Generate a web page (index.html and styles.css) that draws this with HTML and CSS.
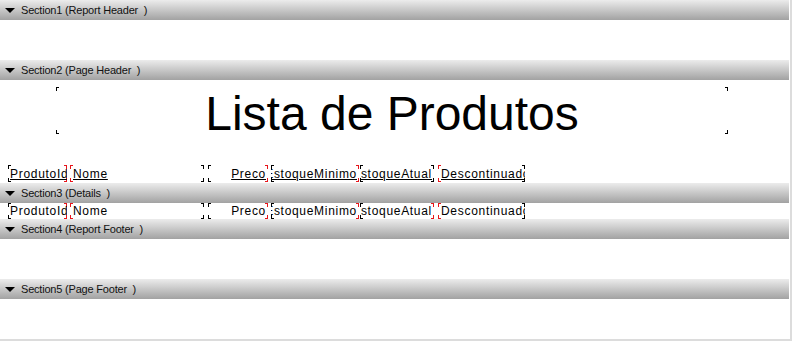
FILE: index.html
```html
<!DOCTYPE html>
<html lang="pt">
<head>
  <meta charset="UTF-8" />
  <title>Lista de Produtos - Designer</title>
  <link rel="stylesheet" href="styles.css">
</head>
<body>

<div class="report">
  <div class="band"><span class="arrow"></span>Section1 (Report Header&nbsp; )</div>
  <div class="area report-header"></div>

  <div class="band"><span class="arrow"></span>Section2 (Page Header&nbsp; )</div>
  <div class="area page-header">
    <div class="title">Lista de Produtos</div>
    <div class="fields heading">
      <div class="field f-id rr"><span>ProdutoId</span></div>
      <div class="field f-nome lr"><span>Nome</span></div>
      <div class="field f-preco rr right"><span>Preco</span></div>
      <div class="field f-min rr right"><span>EstoqueMinimo</span></div>
      <div class="field f-atual right"><span>EstoqueAtual</span></div>
      <div class="field f-desc lr"><span>Descontinuado</span></div>
    </div>
  </div>

  <div class="band"><span class="arrow"></span>Section3 (Details&nbsp; )</div>
  <div class="area details">
    <div class="fields">
      <div class="field f-id rr"><span>ProdutoId</span></div>
      <div class="field f-nome lr"><span>Nome</span></div>
      <div class="field f-preco rr right"><span>Preco</span></div>
      <div class="field f-min rr right"><span>EstoqueMinimo</span></div>
      <div class="field f-atual rr right"><span>EstoqueAtual</span></div>
      <div class="field f-desc lr"><span>Descontinuado</span></div>
    </div>
  </div>

  <div class="band"><span class="arrow"></span>Section4 (Report Footer&nbsp; )</div>
  <div class="area report-footer"></div>

  <div class="band"><span class="arrow"></span>Section5 (Page Footer&nbsp; )</div>
  <div class="area page-footer"></div>
</div>

</body>
</html>
```

FILE: styles.css
```css
* { box-sizing: border-box; margin: 0; padding: 0; }
html, body {
  width: 100%;
  height: 100%;
  overflow: hidden;
  background: #dcdcdc;
  font-family: "Liberation Sans", Arial, sans-serif;
}

.report {
  width: 790px;
  height: 339px;
  background: #fff;
}

/* section bands */
.band {
  width: 789px;
  height: 20px;
  display: flex;
  align-items: center;
  padding-left: 5px;
  font-size: 11px;
  letter-spacing: -0.2px;
  color: #111;
  background: linear-gradient(#ececec, #a2a2a2);
}

.arrow {
  width: 0;
  height: 0;
  margin-right: 6px;
  margin-top: 1px;
  border-left: 5px solid transparent;
  border-right: 5px solid transparent;
  border-top: 5px solid #000;
}

.area { height: 40px; }
.page-header { height: 103px; padding-top: 7px; }
.details { height: 16px; }

/* title box with corner marks */
.title {
  --l: #000;
  --r: #000;
  margin-left: 56px;
  width: 672px;
  height: 47px;
  padding-top: 4px;
  line-height: 45px;
  font-size: 48px;
  text-align: center;
  color: #000;
}

.title, .field {
  background:
    linear-gradient(var(--l), var(--l)) left top / 1px 4px no-repeat,
    linear-gradient(var(--l), var(--l)) left top / 3px 1px no-repeat,
    linear-gradient(var(--l), var(--l)) left bottom / 1px 4px no-repeat,
    linear-gradient(var(--l), var(--l)) left bottom / 3px 1px no-repeat,
    linear-gradient(var(--r), var(--r)) right top / 1px 4px no-repeat,
    linear-gradient(var(--r), var(--r)) right top / 3px 1px no-repeat,
    linear-gradient(var(--r), var(--r)) right bottom / 1px 4px no-repeat,
    linear-gradient(var(--r), var(--r)) right bottom / 3px 1px no-repeat;
}

/* field rows */
.fields {
  display: flex;
  height: 16px;
}
.heading {
  margin-top: 31px;
  height: 17px;
}

.field {
  --l: #000;
  --r: #000;
  display: flex;
  align-items: center;
  overflow: hidden;
  white-space: nowrap;
  padding: 0 2px 0 3px;
  font-size: 12px;
  letter-spacing: 0.7px;
  color: #000;
}
.heading .field span { text-decoration: underline; }
.field.right { justify-content: flex-end; }

.lr { --l: #e8141a; }
.rr { --r: #e8141a; }

.f-id    { margin-left: 8px; width: 59px; padding-left: 2px; }
.f-nome  { margin-left: 3px; width: 134px; }
.f-preco { margin-left: 4px; width: 60px; }
.f-min   { margin-left: 3px; width: 88px; }
.f-atual { margin-left: 1px; width: 74px; }
.f-desc  { margin-left: 4px; width: 87px; }
```
